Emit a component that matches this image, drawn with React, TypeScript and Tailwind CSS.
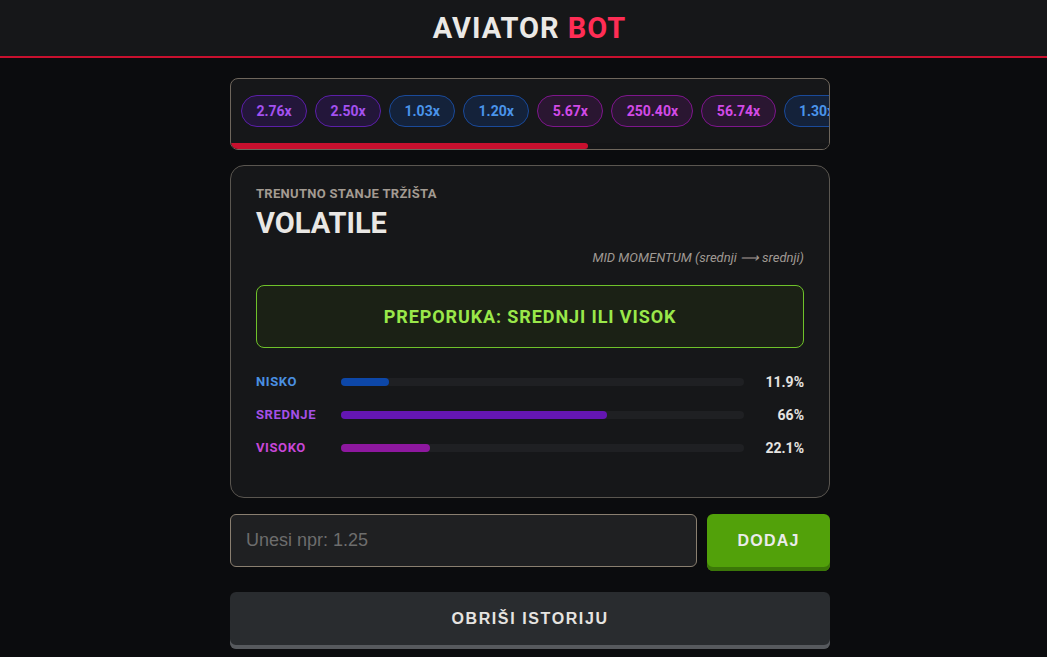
import React from "react";

const chips = [
  { v: "2.76x", t: "p" },
  { v: "2.50x", t: "p" },
  { v: "1.03x", t: "b" },
  { v: "1.20x", t: "b" },
  { v: "5.67x", t: "m" },
  { v: "250.40x", t: "m" },
  { v: "56.74x", t: "m" },
  { v: "1.30x", t: "b" },
];

const chipCls: Record<string, string> = {
  p: "border-[#5b1fa8] bg-[#23163a] text-[#a451f0]",
  b: "border-[#1a4a9a] bg-[#14223a] text-[#4a94ea]",
  m: "border-[#7e168c] bg-[#2a1631] text-[#d24ae6]",
};

const bars = [
  { label: "NISKO", pct: 11.9, val: "11.9%", lc: "text-[#4a90e2]", bc: "bg-[#0d47a8]" },
  { label: "SREDNJE", pct: 66, val: "66%", lc: "text-[#a450e6]", bc: "bg-[#6416b2]" },
  { label: "VISOKO", pct: 22.1, val: "22.1%", lc: "text-[#c847d8]", bc: "bg-[#8e189f]" },
];

export default function App() {
  return (
    <div className="min-h-[657px] bg-[#0b0c0e] font-['Roboto',sans-serif] overflow-hidden">
      <header className="h-[58px] bg-[#161719] border-b-2 border-[#c8102e] flex items-center justify-center pl-[12px]">
        <h1 className="text-[29px] font-bold tracking-[1px] text-[#ebe9e6] leading-none">
          AVIATOR <span className="text-[#ff2d55]">BOT</span>
        </h1>
      </header>
      <main className="w-[600px] ml-[230px] pt-[20px]">
        <div className="border border-[#6e665c] rounded-[8px] bg-[#161719] overflow-hidden">
          <div className="flex gap-[8px] pl-[10px] pt-[16px] pb-[16px] overflow-hidden">
            {chips.map((c, i) => (
              <div
                key={i}
                className={`shrink-0 h-[32px] px-[14.4px] rounded-full border flex items-center text-[14px] font-bold ${chipCls[c.t]}`}
              >
                {c.v}
              </div>
            ))}
          </div>
          <div className="h-[6px] bg-[#141517]">
            <div className="h-full w-[357px] bg-[#c8102e] rounded-r-full" />
          </div>
        </div>

        <div className="mt-[15px] border border-[#5a5650] rounded-[14px] bg-[#161719] px-[25px] pt-[18px] pb-[42px]">
          <div className="text-[13px] font-bold text-[#a39b92] tracking-[0.3px]">TRENUTNO STANJE TRŽIŠTA</div>
          <div className="text-[29px] font-bold text-[#e9e7e4] leading-none mt-[5px]">VOLATILE</div>
          <div className="text-right text-[13px] italic text-[#a09a94] mt-[10px]">MID MOMENTUM (srednji ⟶ srednji)</div>
          <div className="mt-[18px] h-[63px] border border-[#6fc22a] rounded-[8px] bg-[#1b2115] flex items-center justify-center text-[18px] font-bold text-[#9ae84a] tracking-[0.9px]">
            PREPORUKA: SREDNJI ILI VISOK
          </div>
          <div className="mt-[27px] flex flex-col gap-[19px]">
            {bars.map((b) => (
              <div key={b.label} className="flex items-center h-[14px]">
                <div className={`w-[85px] text-[13px] font-bold tracking-[0.6px] ${b.lc}`}>{b.label}</div>
                <div className="w-[403px] h-[8px] rounded-full bg-[#1f2023]">
                  <div className={`h-full rounded-full ${b.bc}`} style={{ width: `${b.pct}%` }} />
                </div>
                <div className="flex-1 text-right text-[14px] font-bold text-[#e6e4e1]">{b.val}</div>
              </div>
            ))}
          </div>
        </div>

        <div className="mt-[16px] flex gap-[10px] items-start">
          <input
            placeholder="Unesi npr: 1.25"
            className="w-[467px] h-[53px] rounded-[6px] border border-[#8a7f70] bg-[#1f2022] px-[15px] text-[18px] font-['Liberation_Sans',Arial,sans-serif] text-[#ddd] placeholder:text-[#6d6d6d] outline-none"
          />
          <button className="flex-1 h-[57px] rounded-[6px] bg-[#52a10a] shadow-[inset_0_-4px_0_#3b7708] pb-[4px] text-[16px] font-bold font-['Liberation_Sans',Arial,sans-serif] text-[#ebebeb] tracking-[1.2px]">
            DODAJ
          </button>
        </div>

        <button className="mt-[21px] w-full h-[57px] rounded-[6px] bg-[#292c2f] shadow-[inset_0_-4px_0_#56595d] pb-[4px] text-[16px] font-bold font-['Liberation_Sans',Arial,sans-serif] text-[#e6e4e1] tracking-[1.6px]">
          OBRIŠI ISTORIJU
        </button>
      </main>
    </div>
  );
}
